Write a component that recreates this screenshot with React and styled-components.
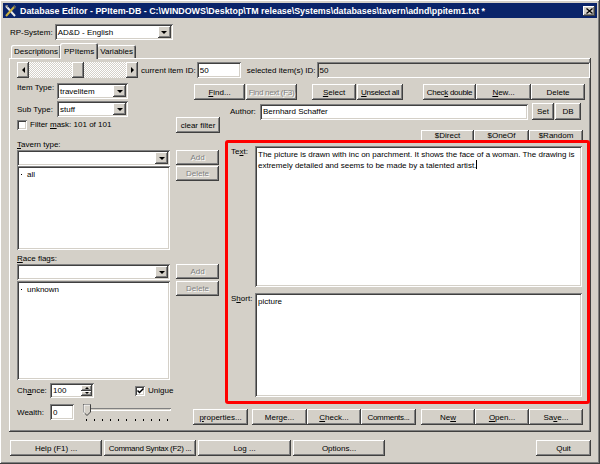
import React from "react";
import styled, { createGlobalStyle, css } from "styled-components";

const GlobalStyle = createGlobalStyle`
  html, body {
    margin: 0;
    padding: 0;
    background: #d4d0c8;
  }
  body {
    font-family: "Liberation Sans", Arial, sans-serif;
    font-size: 8px;
    letter-spacing: 0;
    color: #000;
  }
  * {
    box-sizing: border-box;
  }
`;

const raised = css`
  box-shadow: inset -1px -1px #404040, inset 1px 1px #fff,
    inset -2px -2px #808080, inset 2px 2px #d4d0c8;
`;
const sunken = css`
  box-shadow: inset 1px 1px #808080, inset -1px -1px #fff,
    inset 2px 2px #404040, inset -2px -2px #d4d0c8;
`;

const Window = styled.div`
  width: 600px;
  height: 464px;
  padding: 3px;
  background: #d4d0c8;
  display: flex;
  flex-direction: column;
  overflow: hidden;
  ${raised};
`;
const TitleBar = styled.div`
  height: 15px;
  background: #0a246a;
  color: #fff;
  display: flex;
  align-items: center;
  padding: 0 2px 0 1px;
  font-weight: bold;
  font-size: 8.9px;
  letter-spacing: 0;
  white-space: nowrap;
`;
const TitleText = styled.span`
  flex: 1;
  margin-left: 3px;
`;
const CloseBtn = styled.div`
  width: 12px;
  height: 10px;
  background: #d4d0c8;
  display: flex;
  align-items: center;
  justify-content: center;
  ${raised};
`;
const Content = styled.div`
  flex: 1;
  padding: 6px 6px 0 6px;
  display: flex;
  flex-direction: column;
`;
const Row = styled.div`
  display: flex;
  align-items: ${(p) => p.$align || "center"};
  gap: ${(p) => p.$gap || 0}px;
  margin-top: ${(p) => p.$mt || 0}px;
  margin-left: ${(p) => p.$ml || 0}px;
  height: ${(p) => (p.$h ? `${p.$h}px` : "auto")};
`;
const Label = styled.span`
  display: inline-block;
  min-width: ${(p) => (p.$w ? `${p.$w}px` : "0")};
  margin-right: ${(p) => (p.$mr !== undefined ? p.$mr : 2)}px;
  white-space: nowrap;
  flex-shrink: 0;
`;
const Mn = styled.span`
  text-decoration: underline;
`;

/* --- tabs --- */
const TabStrip = styled.div`
  display: flex;
  align-items: flex-end;
  height: 15px;
  margin-top: 3px;
  padding-left: 2px;
  position: relative;
  z-index: 1;
`;
const Tab = styled.div`
  height: ${(p) => (p.$active ? 16 : 13)}px;
  padding: 0 ${(p) => (p.$active ? 4 : 3)}px;
  margin: 0 ${(p) => (p.$active ? -1 : 0)}px ${(p) => (p.$active ? -1 : 0)}px;
  background: #d4d0c8;
  display: flex;
  align-items: center;
  white-space: nowrap;
  border-radius: 2px 2px 0 0;
  box-shadow: inset 1px 1px #fff, inset -1px 0 #404040, inset -2px 0 #808080;
  z-index: ${(p) => (p.$active ? 2 : 0)};
`;
const Panel = styled.div`
  width: 582px;
  height: 374px;
  padding: 4px 0 0 8px;
  display: flex;
  flex-direction: column;
  ${raised};
`;

/* --- controls --- */
const Btn = styled.div`
  width: ${(p) => p.$w}px;
  height: ${(p) => p.$h || 16}px;
  margin-left: ${(p) => p.$ml || 0}px;
  flex-shrink: 0;
  background: #d4d0c8;
  display: flex;
  align-items: ${(p) => (p.$top ? "flex-start" : "center")};
  padding-top: ${(p) => (p.$top ? 1 : 0)}px;
  justify-content: center;
  white-space: nowrap;
  letter-spacing: ${(p) => (p.$tight ? "-0.3px" : "0")};
  ${raised};
  ${(p) =>
    p.$disabled &&
    css`
      color: #808080;
      text-shadow: 1px 1px #fff;
    `}
`;
const Field = styled.div`
  width: ${(p) => p.$w}px;
  height: ${(p) => p.$h || 16}px;
  margin-left: ${(p) => p.$ml || 0}px;
  flex-shrink: 0;
  background: ${(p) => (p.$gray ? "#d4d0c8" : "#fff")};
  padding: 0 3px;
  display: flex;
  align-items: center;
  white-space: nowrap;
  position: relative;
  ${sunken};
`;
const ComboArrow = styled.div`
  position: absolute;
  right: 2px;
  top: 2px;
  bottom: 2px;
  width: 13px;
  background: #d4d0c8;
  display: flex;
  align-items: center;
  justify-content: center;
  ${raised};
  &::after {
    content: "";
    border-left: 3px solid transparent;
    border-right: 3px solid transparent;
    border-top: 3px solid #000;
  }
`;
const ListBox = styled.div`
  width: 153px;
  height: ${(p) => p.$h}px;
  background: #fff;
  padding: 3px 3px;
  ${sunken};
`;
const ListItem = styled.div`
  display: flex;
  align-items: center;
  height: 10px;
  &::before {
    content: "";
    width: 1px;
    height: 1px;
    background: #000;
    margin: 1px 5px 0 1px;
  }
`;
const CheckBox = styled.div`
  width: 10px;
  height: 10px;
  background: #fff;
  flex-shrink: 0;
  display: flex;
  align-items: center;
  justify-content: center;
  ${sunken};
`;

/* --- scrollbar --- */
const ScrollBar = styled.div`
  width: 121px;
  height: 16px;
  display: flex;
  flex-shrink: 0;
  background: repeating-conic-gradient(#fff 0 25%, #d4d0c8 0 50%) 0 0 / 2px 2px;
`;
const ScrollArrow = styled.div`
  width: 12px;
  height: 16px;
  background: #d4d0c8;
  display: flex;
  align-items: center;
  justify-content: center;
  ${raised};
  &::after {
    content: "";
    border-top: 3px solid transparent;
    border-bottom: 3px solid transparent;
    ${(p) =>
      p.$dir === "left"
        ? css`border-right: 3px solid #000;`
        : css`border-left: 3px solid #000;`}
  }
`;
const ScrollTrack = styled.div`
  flex: 1;
  display: flex;
  padding-left: 43px;
`;
const ScrollThumb = styled.div`
  width: 12px;
  height: 16px;
  background: #d4d0c8;
  ${raised};
`;

/* --- layout regions --- */
const TopGrid = styled.div`
  display: grid;
  grid-template-columns: 159px 18px 25px 364px;
  grid-template-rows: 18px 16px 23px;
  margin-top: 5px;
`;
const Cell = styled.div`
  grid-column: ${(p) => p.$col};
  grid-row: ${(p) => p.$row};
  display: flex;
  flex-direction: ${(p) => p.$dir || "row"};
  align-items: ${(p) => p.$align || "flex-start"};
`;
const Clip = styled.div`
  height: 10px;
  overflow: hidden;
  display: flex;
  margin-top: 10px;
  margin-left: 219px;
  line-height: 9px;
`;
const Main = styled.div`
  display: flex;
  gap: 6px;
`;
const LeftCol = styled.div`
  width: 202px;
  display: flex;
  flex-direction: column;
`;
const SectionLabel = styled.div`
  height: ${(p) => p.$h}px;
  padding-top: ${(p) => p.$pt || 0}px;
  line-height: 9px;
`;
const SideButtons = styled.div`
  display: flex;
  flex-direction: column;
  gap: 1px;
  margin-left: 6px;
`;
const RedBox = styled.div`
  width: 365px;
  height: 264px;
  border: 3px solid #f00;
  border-radius: 3px;
  padding: 3px 5px 4px 3px;
  display: grid;
  grid-template-columns: 24px 1fr;
  grid-template-rows: 141px 104px;
  row-gap: 6px;
`;
const TextLabel = styled.div`
  padding-top: 1px;
`;
const TextArea = styled.div`
  background: #fff;
  padding: 4px 2px 4px 3px;
  line-height: 10px;
  ${sunken};
`;
const Caret = styled.span`
  display: inline-block;
  width: 1px;
  height: 9px;
  background: #000;
  vertical-align: -1px;
`;

/* --- spin + slider --- */
const SpinBtns = styled.div`
  position: absolute;
  right: 2px;
  top: 2px;
  bottom: 2px;
  width: 11px;
  display: flex;
  flex-direction: column;
`;
const SpinBtn = styled.div`
  flex: 1;
  background: #d4d0c8;
  display: flex;
  align-items: center;
  justify-content: center;
  ${raised};
  &::after {
    content: "";
    border-left: 2px solid transparent;
    border-right: 2px solid transparent;
    ${(p) =>
      p.$up
        ? css`border-bottom: 2px solid #000;`
        : css`border-top: 2px solid #000;`}
  }
`;
const Slider = styled.div`
  width: 88px;
  height: 17px;
  flex-shrink: 0;
  position: relative;
`;
const SliderTrack = styled.div`
  position: absolute;
  left: 3px;
  right: 0;
  top: 4px;
  height: 3px;
  box-shadow: inset 1px 1px #808080, inset -1px -1px #fff;
`;
const Ticks = styled.div`
  position: absolute;
  left: 3px;
  right: 3px;
  bottom: 0;
  height: 2px;
  display: flex;
  justify-content: space-between;
  & > i {
    width: 1px;
    height: 2px;
    background: #000;
  }
`;
const Thumb = styled.svg`
  position: absolute;
  left: 0;
  top: 0;
`;

const Combo = ({ w, children, ml }) => (
  <Field $w={w} $ml={ml}>
    {children}
    <ComboArrow />
  </Field>
);

const App = () => {
  return (
    <>
      <GlobalStyle />
      <Window>
        <TitleBar>
          <svg width="13" height="12" viewBox="0 0 13 12">
            <path d="M2 1 L11 11" stroke="#e8e8e8" strokeWidth="2" />
            <path d="M11 1 L2 11" stroke="#c8b040" strokeWidth="2" />
            <path d="M1 0 L4 0 L4 3 Z" fill="#808080" />
            <path d="M9 1 L12 1 L11 4 Z" fill="#606060" />
          </svg>
          <TitleText>
            Database Editor - PPItem-DB - C:\WINDOWS\Desktop\TM release\Systems\databases\tavern\adnd\ppitem1.txt *
          </TitleText>
          <CloseBtn>
            <svg width="7" height="6" viewBox="0 0 7 6">
              <path d="M0.5 0.5 L6.5 5.5 M6.5 0.5 L0.5 5.5" stroke="#000" strokeWidth="1.3" />
            </svg>
          </CloseBtn>
        </TitleBar>
        <Content>
          <Row $ml={1}>
            <Label $w={41}>RP-System:</Label>
            <Combo w={118}>AD&amp;D - English</Combo>
          </Row>

          <TabStrip>
            <Tab>Descriptions</Tab>
            <Tab $active>PPItems</Tab>
            <Tab>Variables</Tab>
          </TabStrip>
          <Panel>
            <Row $h={16}>
              <ScrollBar>
                <ScrollArrow $dir="left" />
                <ScrollTrack>
                  <ScrollThumb />
                </ScrollTrack>
                <ScrollArrow $dir="right" />
              </ScrollBar>
              <Label $w={51} $mr={1} style={{ marginLeft: 3 }}>current item ID:</Label>
              <Field $w={44}>50</Field>
              <Label $w={64} $mr={1} style={{ marginLeft: 6 }}>selected item(s) ID:</Label>
              <Field $w={273} $gray>50</Field>
            </Row>

            <TopGrid>
              <Cell $col="1" $row="1">
                <Label $w={38}>Item Type:</Label>
                <Combo w={71}>travelitem</Combo>
              </Cell>
              <Cell $col="3 / 5" $row="1" style={{ marginTop: 1 }}>
                <Btn $w={51}>
                  <span><Mn>F</Mn>ind...</span>
                </Btn>
                <Btn $w={51} $ml={1} $disabled $tight>Find next (F3)</Btn>
                <Btn $w={44} $ml={15}>
                  <span><Mn>S</Mn>elect</span>
                </Btn>
                <Btn $w={46} $ml={1} $tight>
                  <span><Mn>U</Mn>nselect all</span>
                </Btn>
                <Btn $w={53} $ml={20} $tight>
                  <span>Chec<Mn>k</Mn> double</span>
                </Btn>
                <Btn $w={55}>
                  <span><Mn>N</Mn>ew...</span>
                </Btn>
                <Btn $w={54}>Delete</Btn>
              </Cell>
              <Cell $col="1" $row="2" $align="center">
                <Label $w={38}>Sub Type:</Label>
                <Combo w={71}>stuff</Combo>
              </Cell>
              <Cell $col="1" $row="3" style={{ paddingTop: 3 }}>
                <CheckBox />
                <Label style={{ marginLeft: 3, lineHeight: "10px" }}>
                  Filter <Mn>m</Mn>ask: 101 of 101
                </Label>
              </Cell>
              <Cell $col="2 / 4" $row="3">
                <Btn $w={44}>clear filter</Btn>
              </Cell>
              <Cell $col="4" $row="2 / 4" $dir="column" style={{ paddingTop: 2, marginLeft: -17 }}>
                <Row $ml={28}>
                  <Label $w={28}>Author:</Label>
                  <Field $w={268} $h={16}>Bernhard Schaffer</Field>
                  <Btn $w={22} $h={17} $ml={4}>Set</Btn>
                  <Btn $w={26} $h={17} $ml={1}>DB</Btn>
                </Row>
                <Clip>
                  <Btn $w={53} $h={18} $top>$Direct</Btn>
                  <Btn $w={55} $h={18} $top>$OneOf</Btn>
                  <Btn $w={54} $h={18} $top>$Random</Btn>
                </Clip>
              </Cell>
            </TopGrid>

            <Main>
              <LeftCol>
                <SectionLabel $h={10}>
                  <Mn>T</Mn>avern type:
                </SectionLabel>
                <Row $align="flex-start">
                  <div>
                    <Combo w={153}></Combo>
                    <ListBox $h={84}>
                      <ListItem>all</ListItem>
                    </ListBox>
                  </div>
                  <SideButtons>
                    <Btn $w={43} $h={15} $disabled>Add</Btn>
                    <Btn $w={43} $h={15} $disabled>Delete</Btn>
                  </SideButtons>
                </Row>
                <SectionLabel $h={14} $pt={4}>
                  <Mn>R</Mn>ace flags:
                </SectionLabel>
                <Row $align="flex-start">
                  <div>
                    <Combo w={153}></Combo>
                    <ListBox $h={99} style={{ marginTop: 1 }}>
                      <ListItem>unknown</ListItem>
                    </ListBox>
                  </div>
                  <SideButtons style={{ gap: 2 }}>
                    <Btn $w={43} $h={15} $disabled>Add</Btn>
                    <Btn $w={43} $h={15} $disabled>Delete</Btn>
                  </SideButtons>
                </Row>
                <Row $mt={3}>
                  <Label $w={31}>
                    Ch<Mn>a</Mn>nce:
                  </Label>
                  <Field $w={44} $h={15}>
                    100
                    <SpinBtns>
                      <SpinBtn $up />
                      <SpinBtn />
                    </SpinBtns>
                  </Field>
                  <CheckBox style={{ marginLeft: 41 }}>
                    <svg width="7" height="6" viewBox="0 0 7 6">
                      <path d="M0.5 2.5 L2.5 4.5 L6.5 0.5" stroke="#000" strokeWidth="1.5" fill="none" />
                    </svg>
                  </CheckBox>
                  <Label style={{ marginLeft: 3 }}>Unigue</Label>
                </Row>
              </LeftCol>

              <RedBox>
                <TextLabel>
                  Te<Mn>x</Mn>t:
                </TextLabel>
                <TextArea>
                  The picture is drawn with inc on parchment. It shows the face of a woman. The drawing is
                  extremely detailed and seems to be made by a talented artist.
                  <Caret />
                </TextArea>
                <TextLabel>
                  S<Mn>h</Mn>ort:
                </TextLabel>
                <TextArea>picture</TextArea>
              </RedBox>
            </Main>

            <Row $align="flex-start">
              <Label $w={31} style={{ marginTop: 4 }}>Wealth:</Label>
              <Field $w={24} $h={16}>0</Field>
              <Slider style={{ marginLeft: 9 }}>
                <SliderTrack />
                <Thumb width="8" height="12" viewBox="0 0 8 12">
                  <path d="M0.5 0.5 H7.5 V8 L4 11.5 L0.5 8 Z" fill="#d4d0c8" stroke="#404040" />
                  <path d="M1 10 V1 H7" fill="none" stroke="#fff" />
                </Thumb>
                <Ticks>
                  {Array.from({ length: 11 }).map((_, i) => (
                    <i key={i} />
                  ))}
                </Ticks>
              </Slider>
              <Row style={{ marginTop: 5, marginLeft: 22 }}>
                <Btn $w={55}>
                  <span><Mn>p</Mn>roperties...</span>
                </Btn>
                <Btn $w={55} $ml={4}>Merge...</Btn>
                <Btn $w={54}>
                  <span><Mn>C</Mn>heck...</span>
                </Btn>
                <Btn $w={55} $tight>Comments...</Btn>
                <Btn $w={54} $ml={5}>
                  <span>Ne<Mn>w</Mn></span>
                </Btn>
                <Btn $w={54}>
                  <span><Mn>O</Mn>pen...</span>
                </Btn>
                <Btn $w={54}>
                  <span>Sa<Mn>v</Mn>e...</span>
                </Btn>
              </Row>
            </Row>
          </Panel>

          <Row $mt={8} $ml={1}>
            <Btn $w={92}>Help (F1) ...</Btn>
            <Btn $w={92} $ml={2} $tight>Command Syntax (F2) ...</Btn>
            <Btn $w={93} $ml={2}>Log ...</Btn>
            <Btn $w={92} $ml={2}>Options...</Btn>
            <Btn $w={55} style={{ marginLeft: "auto" }}>Quit</Btn>
          </Row>
        </Content>
      </Window>
    </>
  );
};

export default App;
